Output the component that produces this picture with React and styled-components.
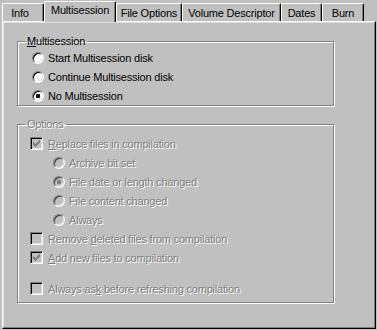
import React from 'react';
import styled, { createGlobalStyle } from 'styled-components';

const GlobalStyle = createGlobalStyle`
  html, body {
    margin: 0;
    padding: 0;
    background: #c0c0c0;
    overflow: hidden;
  }
  body {
    font-family: "Liberation Sans", Arial, sans-serif;
    font-size: 11px;
    letter-spacing: -0.2px;
    color: #000;
  }
`;

const Window = styled.div`
  width: 377px;
  height: 330px;
  padding-top: 1px;
  box-sizing: border-box;
  background: #c0c0c0;
`;

const TabRow = styled.div`
  display: flex;
  align-items: flex-end;
  height: 20px;
  margin-left: 2px;
  position: relative;
  z-index: 1;
`;

const Tab = styled.div`
  box-sizing: border-box;
  width: ${p => p.$w}px;
  height: ${p => (p.$active ? 21 : 18)}px;
  margin-bottom: ${p => (p.$active ? -1 : 0)}px;
  padding-right: ${p => p.$pr || 0}px;
  line-height: ${p => (p.$active ? 17 : 18)}px;
  text-align: center;
  white-space: nowrap;
  background: #c0c0c0;
  border-top: 1px solid #fff;
  border-left: 1px solid #fff;
  border-right: 1px solid #000;
  border-radius: 2px 2px 0 0;
  box-shadow: inset -1px 0 0 #808080;
`;

const Panel = styled.div`
  box-sizing: border-box;
  margin-left: 2px;
  width: 374px;
  height: 308px;
  padding: 13px 0 0 14px;
  border-top: 1px solid #fff;
  border-left: 1px solid #fff;
  border-right: 1px solid #000;
  border-bottom: 1px solid #000;
  box-shadow: inset -1px -1px 0 #808080, inset 1px 1px 0 #dfdfdf;
`;

const Group = styled.fieldset`
  box-sizing: border-box;
  width: 317px;
  margin: ${p => p.$mt || 0}px 0 0 0;
  padding: ${p => p.$pt || 0}px 0 ${p => p.$pb || 0}px 0;
  border: 1px solid #808080;
  box-shadow: 1px 1px 0 #fff, inset 1px 1px 0 #fff;
  min-inline-size: 0;
`;

const Legend = styled.legend`
  margin-left: 7px;
  padding: 0 2px;
  line-height: 13px;
  color: ${p => (p.$disabled ? '#808080' : '#000')};
  text-shadow: ${p => (p.$disabled ? '1px 1px 0 #fff' : 'none')};
`;

const Row = styled.div`
  display: flex;
  align-items: center;
  height: 19px;
  padding-left: ${p => p.$indent}px;
  margin-top: ${p => p.$mt || 0}px;
`;

const Label = styled.span`
  white-space: nowrap;
  color: ${p => (p.$disabled ? '#808080' : '#000')};
  text-shadow: ${p => (p.$disabled ? '1px 1px 0 #fff' : 'none')};
`;

const Key = styled.span`
  text-decoration: underline;
`;

const RadioCircle = styled.span`
  box-sizing: border-box;
  flex: none;
  width: 12px;
  height: 12px;
  margin-right: 4px;
  border-radius: 50%;
  border: 1px solid;
  border-color: #808080 #fff #fff #808080;
  box-shadow: inset 1px 1px 0 ${p => (p.$disabled ? '#404040' : '#000')}, inset -1px -1px 0 #dfdfdf;
  background: ${p => (p.$disabled ? '#c0c0c0' : '#fff')};
  display: flex;
  align-items: center;
  justify-content: center;
`;

const Dot = styled.span`
  width: 4px;
  height: 4px;
  border-radius: 1px;
  background: ${p => (p.$disabled ? '#808080' : '#000')};
`;

const CheckBox = styled.span`
  box-sizing: border-box;
  flex: none;
  width: 13px;
  height: 13px;
  margin-right: 5px;
  border: 1px solid;
  border-color: #808080 #fff #fff #808080;
  box-shadow: inset 1px 1px 0 #000, inset -1px -1px 0 #dfdfdf;
  background: ${p => (p.$disabled ? '#c0c0c0' : '#fff')};
  display: flex;
`;

const checkPixels = [
  [2, 4], [2, 5], [2, 6],
  [3, 5], [3, 6], [3, 7],
  [4, 6], [4, 7], [4, 8],
  [5, 5], [5, 6], [5, 7],
  [6, 4], [6, 5], [6, 6],
  [7, 3], [7, 4], [7, 5],
  [8, 2], [8, 3], [8, 4],
];

const CheckMark = ({ color }) => (
  <svg width="11" height="11" viewBox="0 0 11 11" shapeRendering="crispEdges">
    {checkPixels.map(([x, y]) => (
      <rect key={`${x}-${y}`} x={x} y={y} width="1" height="1" fill={color} />
    ))}
  </svg>
);

const Radio = ({ indent, checked, disabled, children }) => (
  <Row $indent={indent}>
    <RadioCircle $disabled={disabled}>{checked && <Dot $disabled={disabled} />}</RadioCircle>
    <Label $disabled={disabled}>{children}</Label>
  </Row>
);

const Check = ({ indent, checked, disabled, mt, children }) => (
  <Row $indent={indent} $mt={mt}>
    <CheckBox $disabled={disabled}>
      {checked && <CheckMark color={disabled ? '#808080' : '#000'} />}
    </CheckBox>
    <Label $disabled={disabled}>{children}</Label>
  </Row>
);

const tabs = [
  { label: 'Info', w: 42, pr: 6 },
  { label: 'Multisession', w: 72, active: true },
  { label: 'File Options', w: 66 },
  { label: 'Volume Descriptor', w: 99 },
  { label: 'Dates', w: 41 },
  { label: 'Burn', w: 42 },
];

const App = () => {
  return (
    <Window>
      <GlobalStyle />
      <TabRow>
        {tabs.map(t => (
          <Tab key={t.label} $w={t.w} $pr={t.pr} $active={t.active}>
            {t.label}
          </Tab>
        ))}
      </TabRow>
      <Panel>
        <Group>
          <Legend><Key>M</Key>ultisession</Legend>
          <Radio indent={14}>Start Multisession disk</Radio>
          <Radio indent={14}>Continue Multisession disk</Radio>
          <Radio indent={14} checked>No Multisession</Radio>
        </Group>
        <Group $mt={12} $pt={3} $pb={4}>
          <Legend $disabled>Options</Legend>
          <Check indent={12} checked disabled><Key>R</Key>eplace files in compilation</Check>
          <Radio indent={35} disabled>Archive bit set</Radio>
          <Radio indent={35} checked disabled>File date or length changed</Radio>
          <Radio indent={35} disabled>File content changed</Radio>
          <Radio indent={35} disabled>Always</Radio>
          <Check indent={12} disabled>Remove <Key>d</Key>eleted files from compilation</Check>
          <Check indent={12} checked disabled><Key>A</Key>dd new files to compilation</Check>
          <Check indent={12} mt={12} disabled>Always as<Key>k</Key> before refreshing compilation</Check>
        </Group>
      </Panel>
    </Window>
  );
};

export default App;
